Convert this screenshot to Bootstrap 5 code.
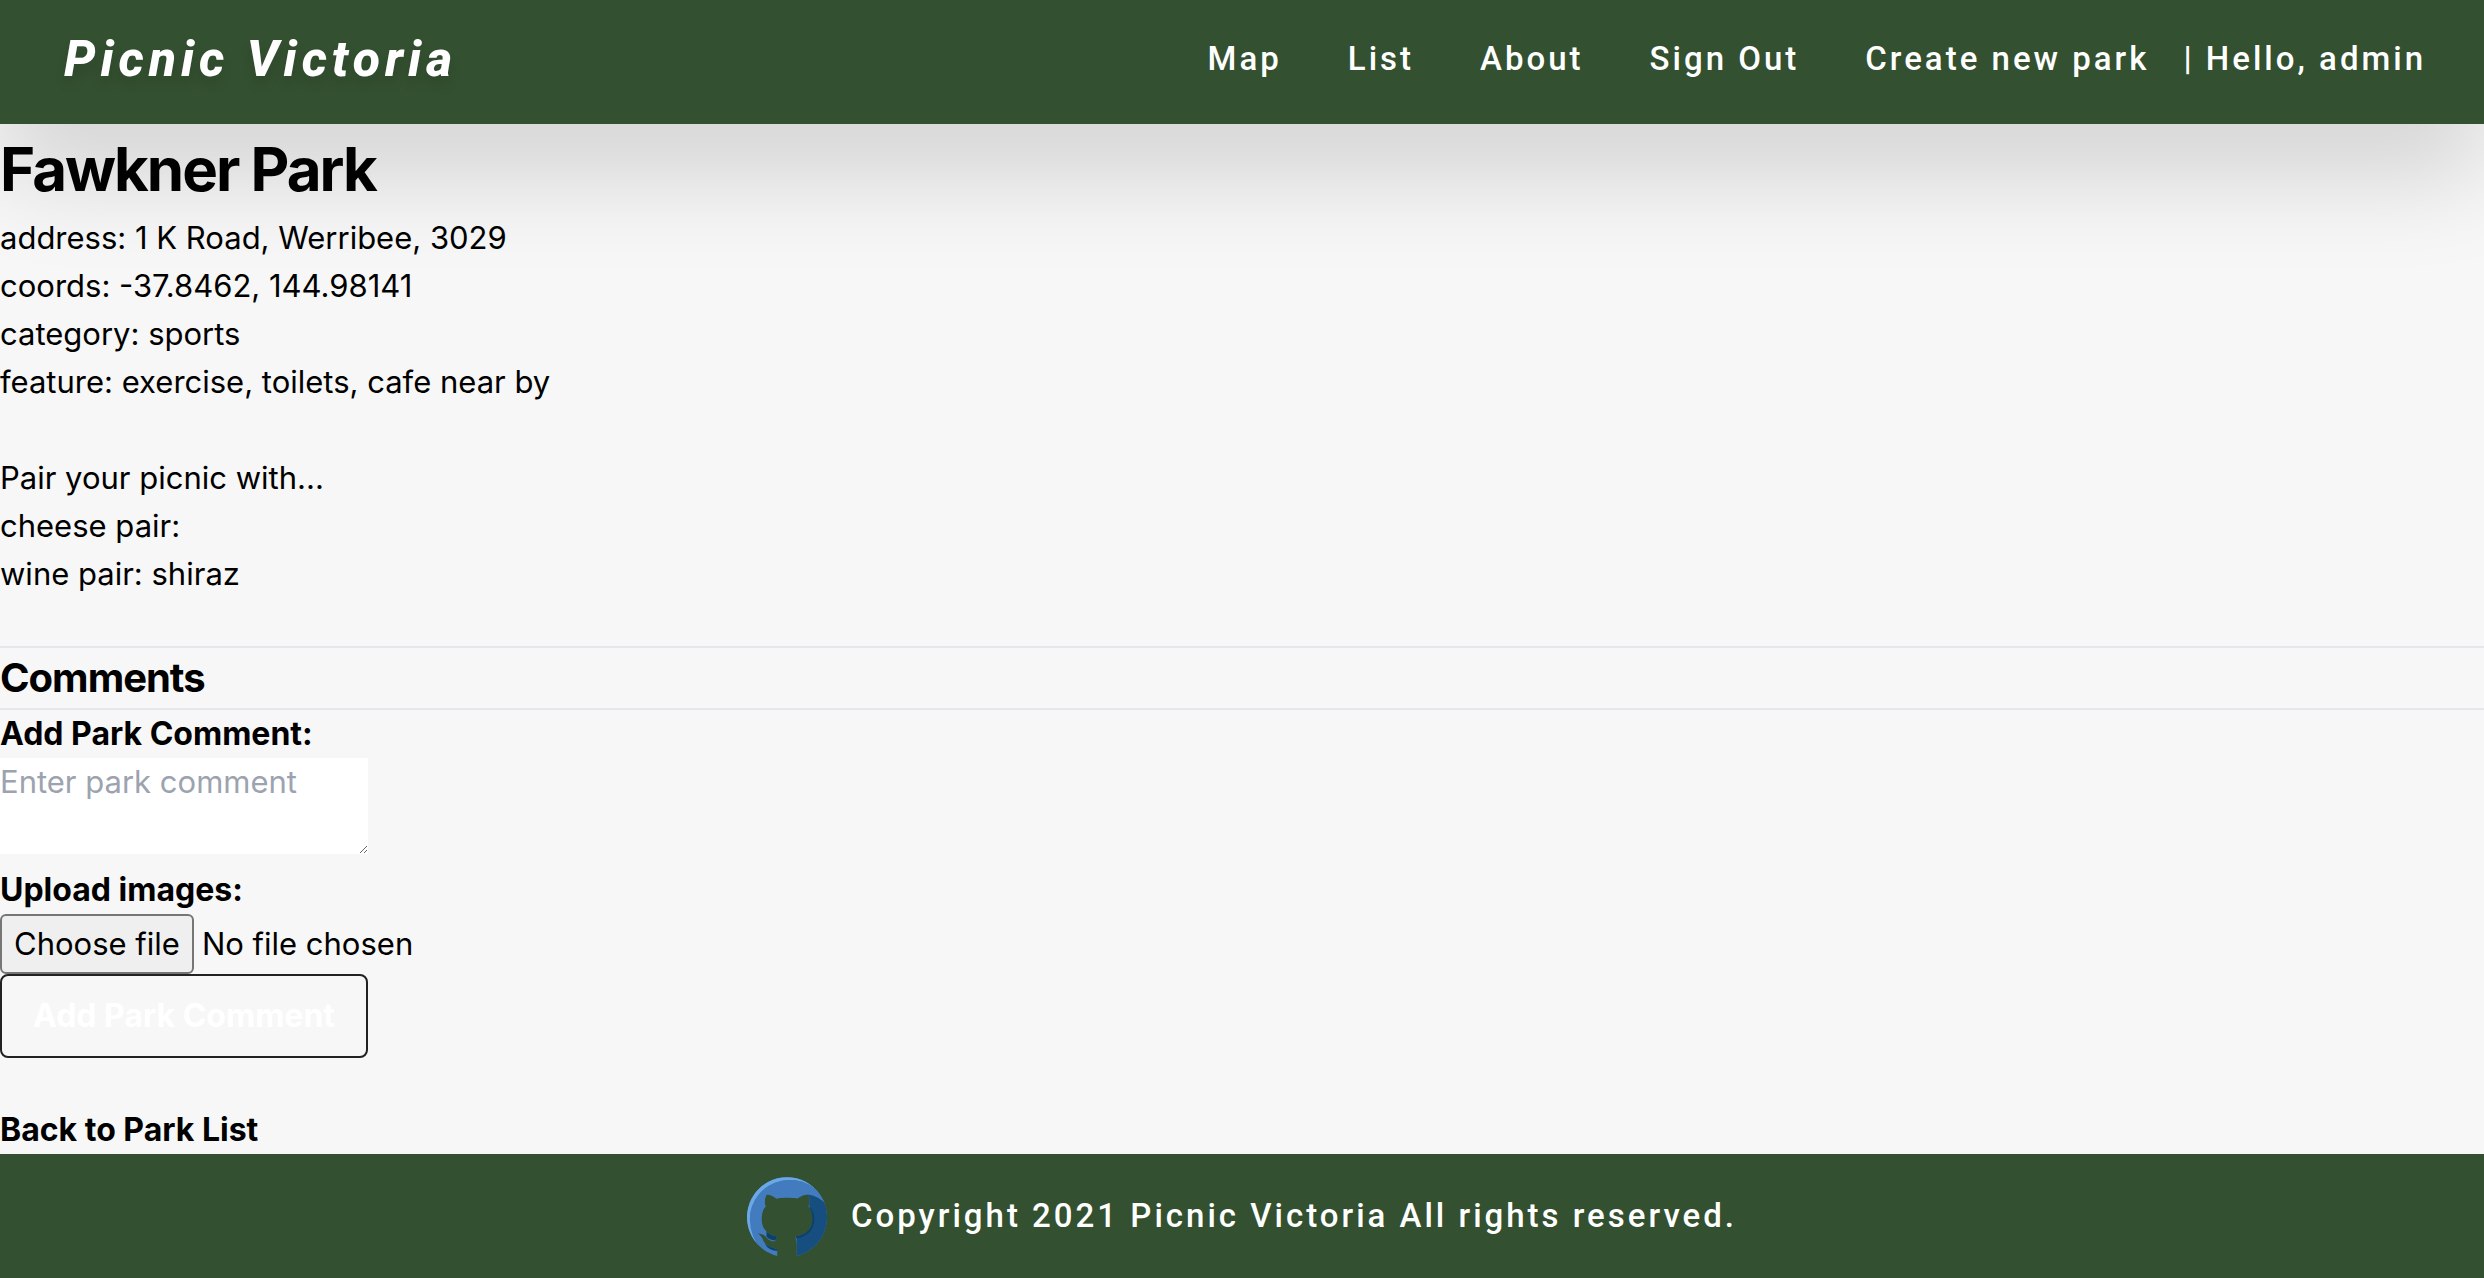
<!DOCTYPE html>
<html lang="en">
<head>
<meta charset="utf-8">
<meta name="viewport" content="width=device-width, initial-scale=1">
<title>Fawkner Park | Picnic Victoria</title>
<link href="https://cdn.jsdelivr.net/npm/bootstrap@5.3.0/dist/css/bootstrap.min.css" rel="stylesheet">
<style>
  body { background: #f7f7f7; color: #000; font-family: Inter, "Liberation Sans", sans-serif; font-size: 31px; line-height: 48px; }
  .site-bar { background: #335030; color: #fff; font-family: Roboto, "Open Sans", sans-serif; font-size: 33px; font-weight: 500; letter-spacing: 3px; min-height: 124px; }
  .site-header { padding: 0 58px 6px 64px; box-shadow: 0 50px 100px rgba(0, 0, 0, .15); }
  .site-name { font-size: 50px; font-weight: 800; font-style: italic; letter-spacing: 5px; text-shadow: 0 8px 12px rgba(0, 0, 0, .12); }
  .site-nav { gap: 0 66px; }
  .greeting { margin-left: -32px; }
  .park-title { font-size: 60px; line-height: 90px; font-weight: 700; letter-spacing: -2px; }
  .section-title { font-size: 40px; line-height: 60px; font-weight: 700; letter-spacing: -1px; border: solid #e5e7eb; border-width: 2px 0; }
  .strong-text { font-size: 32px; font-weight: 700; }
  .comment-form { width: 368px; }
  .comment-box { height: 96px; border: 0; padding: 0; background: #fff; line-height: 48px; outline-offset: -2px; }
  .comment-box::placeholder { color: #9ca3af; }
  .file-btn { border: 2px solid #767676; border-radius: 6px; background: #efefef; padding: 4px 12px; }
  .submit-btn { border: 2px solid #222; border-radius: 8px; background: transparent; color: #fff; padding: 16px 0; }
  .logo-gh { width: 80px; height: 84px; }
</style>
</head>
<body class="d-flex flex-column min-vh-100">
<header class="site-bar site-header d-flex flex-wrap align-items-center justify-content-between">
  <a class="site-name text-reset text-decoration-none" href="#">Picnic Victoria</a>
  <nav class="site-nav d-flex flex-wrap align-items-center">
    <a class="text-reset text-decoration-none" href="#">Map</a>
    <a class="text-reset text-decoration-none" href="#">List</a>
    <a class="text-reset text-decoration-none" href="#">About</a>
    <a class="text-reset text-decoration-none" href="#">Sign Out</a>
    <a class="text-reset text-decoration-none" href="#">Create new park</a>
    <span class="greeting">| Hello, admin</span>
  </nav>
</header>
<main class="flex-grow-1">
  <h1 class="park-title mb-0">Fawkner Park</h1>
  <p class="mb-0">address: 1 K Road, Werribee, 3029<br>coords: -37.8462, 144.98141<br>category: sports<br>feature: exercise, toilets, cafe near by</p>
  <br>
  <p class="mb-0">Pair your picnic with...<br>cheese pair:<br>wine pair: shiraz</p>
  <br>
  <h2 class="section-title mb-0">Comments</h2>
  <form class="comment-form">
    <label class="strong-text d-block text-nowrap" for="comment">Add Park Comment:</label>
    <textarea class="comment-box d-block w-100" id="comment" placeholder="Enter park comment"></textarea>
    <label class="strong-text d-block text-nowrap pt-2 mt-1" for="images">Upload images:</label>
    <div class="d-flex align-items-center gap-2 text-nowrap">
      <label class="file-btn" for="images">Choose file</label>
      <span>No file chosen</span>
      <input class="visually-hidden" type="file" id="images">
    </div>
    <button class="submit-btn strong-text d-block w-100" type="button">Add Park Comment</button>
  </form>
  <br>
  <a class="strong-text text-reset text-decoration-none d-block" href="#">Back to Park List</a>
</main>
<footer class="site-bar d-flex align-items-center justify-content-center gap-4">
  <a href="#" aria-label="GitHub" class="d-flex">
    <svg class="logo-gh" viewBox="0 -3 82 86" aria-hidden="true">
      <defs>
        <clipPath id="cat"><path d="M31 81A41 41 0 1 1 51 81L51 71Q51 63 49 61Q67 58 67 43Q67 35 63 30Q66 22 62 18Q57 18 52 22Q41 20 30 22Q25 18 20 18Q17 24 19 30Q15 35 15 43Q15 58 31 61Q29 64 29 66Q23 66 20 62Q17 58 11 58Q15 60 17 66Q20 72 31 74Z"/></clipPath>
      </defs>
      <g clip-path="url(#cat)">
        <path fill="#427bbe" d="M0 0H82V82H0z"/>
        <path fill="#6aa8e6" d="M0 0H82V28A41 40 0 0 0 3 44Q3 65 22 82H0z"/>
        <path fill="#427bbe" d="M82 28A41 40 0 0 0 3 44L20 30L62 18Z"/>
        <path fill="#174e80" d="M62 18Q73 19 82 29V82H51V61Q64 58 66 43Q66 35 64 30Z"/>
        <path fill="#0f4168" d="M64 30Q70 36 69 46Q66 61 51 63L48 60Q65 56 66 43ZM20 61Q23 65 30 65L32 60Q24 58 20 54ZM18 68Q23 72 32 72V76Q22 76 18 68Z"/>
      </g>
    </svg>
  </a>
  <span>Copyright 2021 Picnic Victoria All rights reserved.</span>
</footer>
<script src="https://cdn.jsdelivr.net/npm/bootstrap@5.3.0/dist/js/bootstrap.bundle.min.js"></script>
</body>
</html>
